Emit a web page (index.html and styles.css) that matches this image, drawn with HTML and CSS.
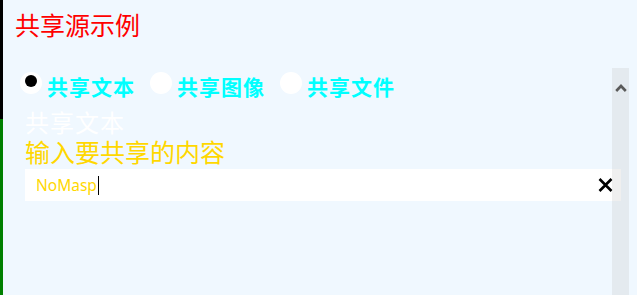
FILE: index.html
```html
<!DOCTYPE html>
<html lang="zh-CN">
<head>
<meta charset="utf-8">
<title>共享源示例</title>
<link rel="stylesheet" href="styles.css">
</head>
<body>
<div class="app">
  <div class="strip">
    <div class="strip-top"></div>
    <div class="strip-bottom"></div>
  </div>
  <div class="main">
    <h1 class="title">共享源示例</h1>
    <div class="scroller">
      <div class="content">
        <div class="radios">
          <div class="radio">
            <span class="circle"><span class="dot"></span></span>
            <span class="rlabel">共享文本</span>
          </div>
          <div class="radio">
            <span class="circle"></span>
            <span class="rlabel">共享图像</span>
          </div>
          <div class="radio">
            <span class="circle"></span>
            <span class="rlabel">共享文件</span>
          </div>
        </div>
        <div class="heading">共享文本</div>
        <div class="prompt">输入要共享的内容</div>
        <div class="textbox">
          <span class="value">NoMasp</span><span class="caret"></span>
          <svg class="clear" width="15" height="14" viewBox="0 0 15 14" aria-hidden="true">
            <path d="M1.5 1 L13.5 13 M13.5 1 L1.5 13" stroke="#000" stroke-width="2.6" fill="none"/>
          </svg>
        </div>
      </div>
      <div class="scrollbar">
        <svg class="chev" width="12" height="9" viewBox="0 0 12 9" aria-hidden="true">
          <path d="M1.2 8 L6 3 L10.8 8" stroke="#5a5a5a" stroke-width="2.6" fill="none"/>
        </svg>
      </div>
    </div>
  </div>
</div>
</body>
</html>
```
FILE: styles.css
```css
html, body {
  margin: 0;
  padding: 0;
  background: #f0f8ff;
}

.app {
  display: flex;
  width: 637px;
  height: 295px;
  overflow: hidden;
  font-family: "Noto Sans CJK SC", sans-serif;
}

.strip {
  width: 3px;
  display: flex;
  flex-direction: column;
}

.strip-top {
  height: 119px;
  background: #000;
}

.strip-bottom {
  flex: 1;
  background: #008000;
}

.main {
  flex: 1;
  display: flex;
  flex-direction: column;
  min-width: 0;
}

.title {
  margin: 0 0 31px 0;
  padding: 12px 0 0 12px;
  font-size: 25px;
  line-height: 25px;
  font-weight: normal;
  color: #ff0000;
}

.scroller {
  flex: 1;
  position: relative;
}

.content {
  padding: 4px 16px 0 17px;
}

.radios {
  display: flex;
}

.radio {
  width: 130px;
  display: flex;
  align-items: flex-start;
}

.circle {
  width: 22px;
  height: 22px;
  border-radius: 50%;
  background: #fff;
  box-sizing: border-box;
  padding: 3px 0 0 5px;
  flex: none;
}

.dot {
  display: block;
  width: 12px;
  height: 12px;
  border-radius: 50%;
  background: #000;
}

.rlabel {
  margin: 4px 0 0 5px;
  font-size: 21px;
  line-height: 21px;
  letter-spacing: 1px;
  font-weight: bold;
  color: #00ffff;
  white-space: nowrap;
}

.heading {
  margin: 13px 0 0 5px;
  font-size: 24px;
  line-height: 24px;
  letter-spacing: 1px;
  color: #ffffff;
}

.prompt {
  margin: 5px 0 0 5px;
  font-size: 25px;
  line-height: 25px;
  color: #ffd700;
}

.textbox {
  margin: 5px 0 0 5px;
  height: 32px;
  background: #fff;
  display: flex;
  align-items: center;
  padding: 0 8px 0 11px;
  font-family: "Noto Sans", sans-serif;
}

.value {
  font-size: 15.5px;
  line-height: 19px;
  color: #ffd700;
}

.caret {
  width: 1px;
  height: 19px;
  background: #000;
  margin-left: 1px;
}

.clear {
  margin-left: auto;
  display: block;
}

.scrollbar {
  position: absolute;
  top: 0;
  bottom: 0;
  right: 8px;
  width: 17px;
  background: rgba(190, 190, 190, 0.25);
  display: flex;
  justify-content: center;
  align-items: flex-start;
}

.chev {
  margin-top: 15px;
  display: block;
}
```
